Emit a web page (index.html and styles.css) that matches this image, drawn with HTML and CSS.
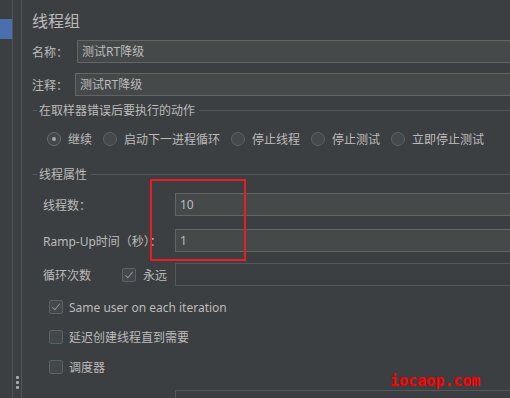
FILE: index.html
```html
<!DOCTYPE html>
<html lang="zh-CN">
<head>
    <meta charset="UTF-8">
    <meta name="viewport" content="width=device-width, initial-scale=1.0">
    <title>线程组</title>
    <link rel="stylesheet" href="styles.css">
</head>
<body>
    <div class="rail">
        <div class="rail-item active"></div>
    </div>
    <div class="strip">
        <span class="grip"></span>
        <span class="grip"></span>
        <span class="grip"></span>
    </div>

    <div class="panel">
        <h1 class="panel-title">线程组</h1>

        <div class="row name-row">
            <label class="label">名称：</label>
            <div class="field">测试RT降级</div>
        </div>
        <div class="row comment-row">
            <label class="label">注释：</label>
            <div class="field">测试RT降级</div>
        </div>

        <div class="group-title">在取样器错误后要执行的动作</div>
        <div class="radio-row">
            <span class="radio-item"><span class="radio checked"></span>继续</span>
            <span class="radio-item"><span class="radio"></span>启动下一进程循环</span>
            <span class="radio-item"><span class="radio"></span>停止线程</span>
            <span class="radio-item"><span class="radio"></span>停止测试</span>
            <span class="radio-item"><span class="radio"></span>立即停止测试</span>
        </div>

        <div class="group-title props-title">线程属性</div>
        <div class="prop-row threads-row">
            <label class="prop-label">线程数：</label>
            <div class="field">10</div>
        </div>
        <div class="prop-row ramp-row">
            <label class="prop-label">Ramp-Up时间（秒）：</label>
            <div class="field">1</div>
        </div>
        <div class="prop-row loop-row">
            <label class="prop-label loop-label">
                <span class="loop-text">循环次数</span>
                <span class="check-item"><span class="checkbox checked"></span>永远</span>
            </label>
            <div class="field disabled"></div>
        </div>

        <div class="check-row same-row"><span class="checkbox checked"></span>Same user on each iteration</div>
        <div class="check-row"><span class="checkbox"></span>延迟创建线程直到需要</div>
        <div class="check-row"><span class="checkbox"></span>调度器</div>

        <div class="prop-row tail-row">
            <span class="prop-label"></span>
            <div class="field disabled"></div>
        </div>

        <div class="highlight"></div>
        <div class="watermark">iocaop.com</div>
    </div>
</body>
</html>
```

FILE: styles.css
```css
body {
    margin: 0;
    width: 510px;
    height: 398px;
    overflow: hidden;
    display: flex;
    background-color: #3c3f41;
    color: #bbbbbb;
    font-family: "Noto Sans", "Noto Sans CJK SC", sans-serif;
    font-size: 12px;
}

.rail {
    width: 12px;
    border-right: 1px solid #515557;
    padding-top: 19px;
}

.rail-item {
    height: 20px;
}

.rail-item.active {
    background-color: #4b6eaf;
}

.strip {
    width: 8px;
    border-right: 1px solid #515557;
    display: flex;
    flex-direction: column;
    align-items: center;
    justify-content: flex-end;
    gap: 2px;
    padding-bottom: 9px;
}

.grip {
    width: 3px;
    height: 3px;
    border-radius: 1px;
    background-color: #a9abad;
}

.panel {
    flex: 1;
    position: relative;
    padding-top: 11px;
}

.panel-title {
    margin: 0 0 9px 10px;
    font-size: 16px;
    font-weight: normal;
    line-height: 20px;
}

.row {
    display: flex;
    align-items: center;
    height: 23px;
    padding-left: 10px;
}

.name-row .label {
    width: 45px;
}

.comment-row {
    margin-top: 10px;
}

.comment-row .label {
    width: 43px;
}

.field {
    flex: 1;
    height: 21px;
    line-height: 21px;
    padding-left: 4px;
    background-color: #45494a;
    border: 1px solid #646464;
    border-right: none;
}

.field.disabled {
    background-color: #3c3f41;
    border-color: #54585a;
}

.group-title {
    display: flex;
    align-items: center;
    height: 16px;
    margin-top: 6px;
    margin-left: 11px;
}

.group-title::before {
    content: "";
    width: 4px;
    height: 1px;
    margin-right: 2px;
    background-color: #54585a;
}

.group-title::after {
    content: "";
    flex: 1;
    height: 1px;
    margin-left: 4px;
    background-color: #54585a;
}

.props-title {
    margin-top: 17px;
}

.radio-row {
    display: flex;
    align-items: center;
    gap: 11px;
    height: 20px;
    margin-top: 11px;
    padding-left: 25px;
}

.radio-item,
.check-item {
    display: flex;
    align-items: center;
    gap: 7px;
}

.radio {
    width: 12px;
    height: 12px;
    border-radius: 50%;
    border: 1px solid #5e6163;
    background-color: #43484a;
    display: flex;
    align-items: center;
    justify-content: center;
}

.radio.checked {
    border-color: #6c6e70;
}

.radio.checked::after {
    content: "";
    width: 4px;
    height: 4px;
    border-radius: 50%;
    background-color: #a6a8a9;
}

.prop-row {
    display: flex;
    align-items: center;
    height: 23px;
    margin-top: 11px;
}

.threads-row {
    margin-top: 11px;
}

.ramp-row {
    margin-top: 13px;
}

.prop-label {
    width: 132px;
    padding-left: 21px;
    box-sizing: content-box;
}

.loop-label {
    display: flex;
    align-items: center;
}

.loop-text {
    width: 79px;
}

.checkbox {
    width: 12px;
    height: 12px;
    border: 1px solid #5e6163;
    border-radius: 2px;
    background-color: #43484a;
    position: relative;
}

.checkbox.checked::after {
    content: "";
    position: absolute;
    left: 4px;
    top: 1px;
    width: 3px;
    height: 7px;
    border-style: solid;
    border-color: #8e9092;
    border-width: 0 1.5px 1.5px 0;
    transform: rotate(40deg);
}

.check-row {
    display: flex;
    align-items: center;
    gap: 6px;
    height: 20px;
    margin-top: 11px;
    padding-left: 27px;
}

.same-row {
    margin-top: 11px;
}

.check-row + .check-row {
    margin-top: 10px;
}

.tail-row {
    margin-top: 13px;
}

.highlight {
    position: absolute;
    left: 128px;
    top: 179px;
    width: 92px;
    height: 78px;
    border: 2px solid #e81e25;
}

.watermark {
    position: absolute;
    left: 368px;
    top: 373px;
    font-family: "DejaVu Sans Mono", monospace;
    font-size: 15px;
    font-weight: bold;
    line-height: 17px;
    color: #ff0000;
}
```
